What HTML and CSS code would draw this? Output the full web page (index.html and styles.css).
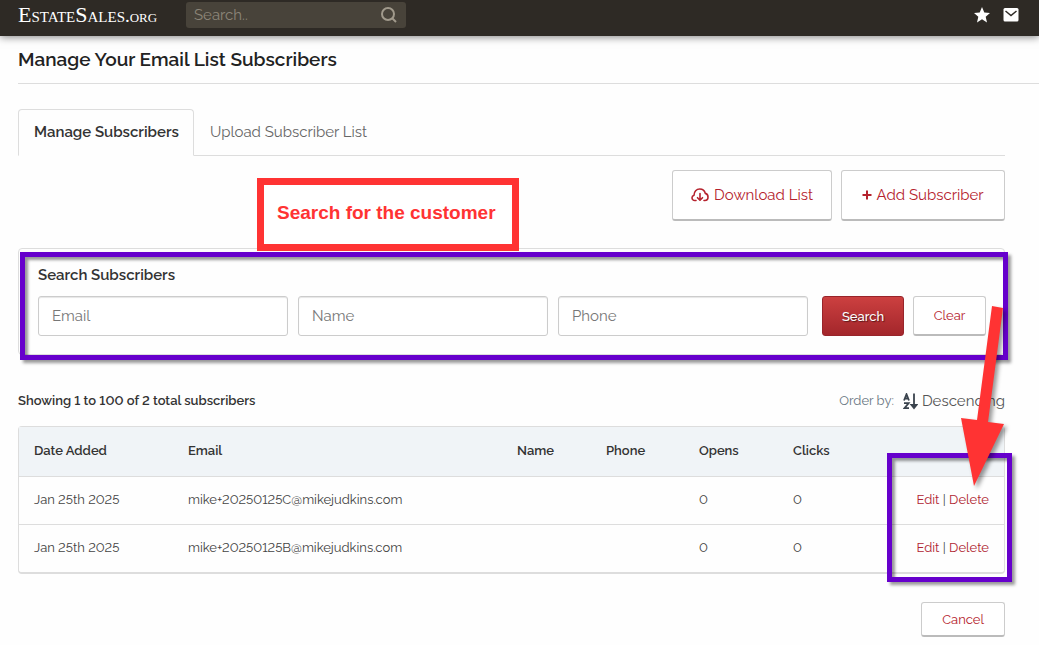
FILE: index.html
```html
<!DOCTYPE html>
<html lang="en">
<head>
    <meta charset="UTF-8">
    <meta name="viewport" content="width=device-width, initial-scale=1.0">
    <title>Manage Your Email List Subscribers</title>
    <link rel="stylesheet" href="styles.css">
</head>
<body>

    <header class="topbar">
        <a class="logo" href="#">EstateSales<span class="logo-org">.org</span></a>
        <form class="site-search">
            <input type="search" placeholder="Search.." aria-label="Search the site">
            <button type="button" aria-label="Search the site now">
                <svg width="18" height="18" viewBox="0 0 18 18" fill="none" stroke="currentColor" stroke-width="2"><circle cx="8" cy="8" r="6"/><path d="M12.5 12.5L16 16"/></svg>
            </button>
        </form>
        <nav class="topbar-icons">
            <a href="#" aria-label="Favorites">
                <svg width="16" height="16" viewBox="0 0 16 16" fill="currentColor"><path d="M8 0l2.3 5.4 5.7.5-4.3 3.8L13 15.4 8 12.3l-5 3.1 1.3-5.7L0 5.9l5.7-.5z"/></svg>
            </a>
            <a href="#" aria-label="Messages">
                <svg width="16" height="14" viewBox="0 0 16 14"><rect x="0.5" width="15" height="13.5" rx="1.5" fill="currentColor"/><path d="M2.5 3L8 7.5 13.5 3" fill="none" stroke="#2e2a25" stroke-width="1.5"/></svg>
            </a>
        </nav>
    </header>

    <main class="page">
        <h1>Manage Your Email List Subscribers</h1>

        <div class="content">
            <nav class="tabs">
                <a class="tab active" href="#">Manage Subscribers</a>
                <a class="tab" href="#">Upload Subscriber List</a>
            </nav>

            <div class="actions">
                <button type="button" class="btn btn-large">
                    <svg width="18" height="14" viewBox="0 0 18 14" fill="none" stroke="currentColor" stroke-width="1.6" stroke-linecap="round" stroke-linejoin="round"><path d="M5 12.5H3.8C2.2 12.5 1 11.4 1 9.8c0-1.3.8-2.3 2-2.6C3 3.6 5.5 1 8.7 1c2.9 0 5 1.8 5.6 4.4C16 5.7 17 7.3 17 9c0 2-1.2 3.5-3.2 3.5H13"/><path d="M9 5.5v6.5M6.5 9.7L9 12.2l2.5-2.5"/></svg>
                    Download List
                </button>
                <button type="button" class="btn btn-large btn-add">
                    <svg width="10" height="10" viewBox="0 0 10 10" stroke="currentColor" stroke-width="2"><path d="M5 0.5v9M0.5 5h9"/></svg>
                    Add Subscriber
                </button>
            </div>

            <form class="search-panel">
                <h2>Search Subscribers</h2>
                <div class="fields">
                    <input type="text" placeholder="Email" aria-label="Email">
                    <input type="text" placeholder="Name" aria-label="Name">
                    <input type="text" placeholder="Phone" aria-label="Phone">
                    <div class="field-buttons">
                        <button type="button" class="btn btn-primary">Search</button>
                        <button type="button" class="btn">Clear</button>
                    </div>
                </div>
                <div class="highlight highlight-search"></div>
                <div class="callout">Search for the customer</div>
            </form>

            <div class="list-info">
                <p class="count">Showing 1 to 100 of 2 total subscribers</p>
                <div class="order">
                    <span>Order by:</span>
                    <a href="#">
                        <svg width="15" height="17" viewBox="0 0 15 17" fill="none" stroke="currentColor" stroke-width="1.8"><path d="M1 7.5L3.5 1.2 6 7.5M2 5.5h3M1 10.2h4.6L1.5 15.2H6M11 0.5v14"/><path d="M8.5 12l2.5 3 2.5-3z" fill="currentColor"/></svg>
                        Descending
                    </a>
                </div>
            </div>

            <div class="table-box">
                <table>
                    <thead>
                        <tr>
                            <th class="col-date">Date Added</th>
                            <th>Email</th>
                            <th class="col-name">Name</th>
                            <th class="col-phone">Phone</th>
                            <th class="col-opens">Opens</th>
                            <th class="col-clicks">Clicks</th>
                            <th class="col-links"></th>
                        </tr>
                    </thead>
                    <tbody>
                        <tr>
                            <td>Jan 25th 2025</td>
                            <td>mike+20250125C@mikejudkins.com</td>
                            <td></td>
                            <td></td>
                            <td>0</td>
                            <td>0</td>
                            <td class="col-links"><a href="#">Edit</a> | <a href="#">Delete</a></td>
                        </tr>
                        <tr>
                            <td>Jan 25th 2025</td>
                            <td>mike+20250125B@mikejudkins.com</td>
                            <td></td>
                            <td></td>
                            <td>0</td>
                            <td>0</td>
                            <td class="col-links"><a href="#">Edit</a> | <a href="#">Delete</a></td>
                        </tr>
                    </tbody>
                </table>
                <div class="highlight highlight-links"></div>
                <svg class="arrow" width="44" height="180" viewBox="0 0 44 180"><path d="M31 0L42 2 27 116 43 118 13 180 0 112 16 114z" fill="#ff3333"/></svg>
            </div>

            <div class="footer-actions">
                <button type="button" class="btn">Cancel</button>
            </div>
        </div>
    </main>

</body>
</html>
```
FILE: styles.css
```css
* {
    box-sizing: border-box;
}

body {
    margin: 0;
    background: #fefefe;
    color: #444;
    font-family: Raleway, Lato, sans-serif;
    font-size: 13px;
    font-variant-numeric: lining-nums;
    line-height: 20px;
}

a {
    color: #af2430;
    text-decoration: none;
}

input,
button {
    font-family: inherit;
}

/* Top bar */
.topbar {
    display: flex;
    align-items: center;
    height: 36px;
    padding: 0 20px 6px 18px;
    background: #2e2a25;
    box-shadow: 0 1px 8px rgba(0, 0, 0, 0.5);
}

.logo {
    width: 168px;
    color: #fff;
    font-family: "Liberation Serif", serif;
    font-size: 22px;
    font-variant: small-caps;
    white-space: nowrap;
}

.logo-org {
    font-size: 19px;
}

.site-search {
    display: flex;
    align-items: center;
    width: 220px;
    height: 26px;
    padding: 0 8px;
    background: #48433a;
    border-radius: 3px;
}

.site-search input {
    flex: 1;
    min-width: 0;
    padding: 0;
    border: 0;
    background: none;
    color: #fff;
    font-size: 15px;
    outline: none;
}

.site-search input::placeholder {
    color: #8d8679;
}

.site-search button {
    display: flex;
    padding: 0;
    border: 0;
    background: none;
    color: #a19a8c;
}

.topbar-icons {
    display: flex;
    align-items: center;
    gap: 13px;
    margin-left: auto;
}

.topbar-icons a {
    display: flex;
    color: #fff;
}

/* Page */
.page {
    padding-left: 18px;
}

h1 {
    margin: 0;
    padding: 11px 0 12px;
    border-bottom: 1px solid #ddd;
    color: #222;
    font-size: 19px;
    font-weight: 600;
    line-height: 24px;
}

.content {
    padding: 25px 34px 8px 0;
}

.tabs {
    display: flex;
    border-bottom: 1px solid #ddd;
}

.tab {
    margin-bottom: -1px;
    padding: 12px 14px 13px 15px;
    border: 1px solid transparent;
    color: #666;
    font-size: 15px;
}

.tab.active {
    border-color: #ddd #ddd #fefefe;
    border-radius: 4px 4px 0 0;
    color: #333;
    font-weight: 600;
}

.btn {
    height: 35px;
    padding: 0 20px;
    border: 1px solid #ccc;
    border-bottom: 2px solid #bbb;
    border-radius: 3px;
    background: #fff;
    color: #b5222d;
    font-size: 13px;
    white-space: nowrap;
}

.btn-large {
    display: flex;
    align-items: center;
    justify-content: center;
    gap: 5px;
    width: 160px;
    height: 51px;
    padding: 0;
    font-size: 15px;
}

.btn-add {
    width: 164px;
    gap: 4px;
}

.btn-primary {
    border: 1px solid #98242a;
    background: linear-gradient(#cc4040, #a3262b);
    color: #fff;
    font-weight: 500;
    text-shadow: 1px 1px 1px rgba(0, 0, 0, 0.5);
}

.actions {
    display: flex;
    justify-content: flex-end;
    gap: 9px;
    padding: 14px 0 27px;
}

/* Search form */
.search-panel {
    position: relative;
    padding: 16px 18px 18px 19px;
    border: 1px solid #ddd;
    border-radius: 4px;
}

.search-panel h2 {
    margin: 0 0 11px;
    color: #333;
    font-size: 15px;
    font-weight: 600;
    line-height: 20px;
}

.fields {
    display: flex;
    gap: 10px;
}

.fields input {
    flex: 1;
    min-width: 0;
    height: 40px;
    padding: 0 13px;
    border: 1px solid #ccc;
    border-radius: 3px;
    background: #fff;
    box-shadow: inset 0 1px 1px rgba(0, 0, 0, 0.1);
    font-size: 15px;
    outline: none;
}

.fields input::placeholder {
    color: #777;
}

.field-buttons {
    display: flex;
    gap: 9px;
    padding-left: 4px;
}

.field-buttons .btn {
    width: 73px;
    height: 40px;
    padding: 0;
}

.field-buttons .btn-primary {
    width: 82px;
}

/* Highlights */
.highlight {
    position: absolute;
    border: 5px solid #6600cc;
    box-shadow: 3px 3px 3px rgba(0, 0, 0, 0.4), inset 3px 3px 3px rgba(0, 0, 0, 0.4);
    pointer-events: none;
}

.highlight-search {
    top: 3px;
    right: -4px;
    bottom: -6px;
    left: 1px;
}

.highlight-links {
    top: 26px;
    right: -8px;
    bottom: -10px;
    width: 125px;
}

.callout {
    position: absolute;
    top: -71px;
    left: 238px;
    padding: 18px 16px 21px 13px;
    border: 7px solid #ff3333;
    background: #fff;
    color: #ff3333;
    font-family: "Liberation Sans", sans-serif;
    font-size: 19px;
    font-weight: 700;
    white-space: nowrap;
}

.arrow {
    position: absolute;
    top: -121px;
    right: -1px;
    filter: drop-shadow(3px 3px 2px rgba(0, 0, 0, 0.4));
    pointer-events: none;
}

/* Subscriber list */
.list-info {
    display: flex;
    justify-content: space-between;
    align-items: center;
    padding: 36px 0 15px;
}

.count {
    margin: 0;
    color: #333;
    font-weight: 600;
}

.order {
    display: flex;
    align-items: center;
    gap: 9px;
    color: #6a7783;
}

.order a {
    display: flex;
    align-items: center;
    gap: 4px;
    color: #555;
    font-size: 15px;
}

.order svg {
    color: #3a434d;
}

.table-box {
    position: relative;
    border: 1px solid #ddd;
    border-bottom-width: 2px;
    border-radius: 4px;
}

table {
    width: 100%;
    border-collapse: collapse;
    table-layout: fixed;
}

th,
td {
    height: 48px;
    padding: 0 15px;
    text-align: left;
}

th {
    height: 49px;
    background: #f0f4f7;
    color: #333;
    font-weight: 600;
}

tbody tr {
    border-top: 1px solid #ddd;
}

.col-date {
    width: 154px;
}

.col-name {
    width: 89px;
}

.col-phone {
    width: 93px;
}

.col-opens {
    width: 94px;
}

.col-clicks {
    width: 94px;
}

.col-links {
    width: 132px;
    text-align: right;
}

.footer-actions {
    display: flex;
    justify-content: flex-end;
    padding-top: 28px;
}
```
